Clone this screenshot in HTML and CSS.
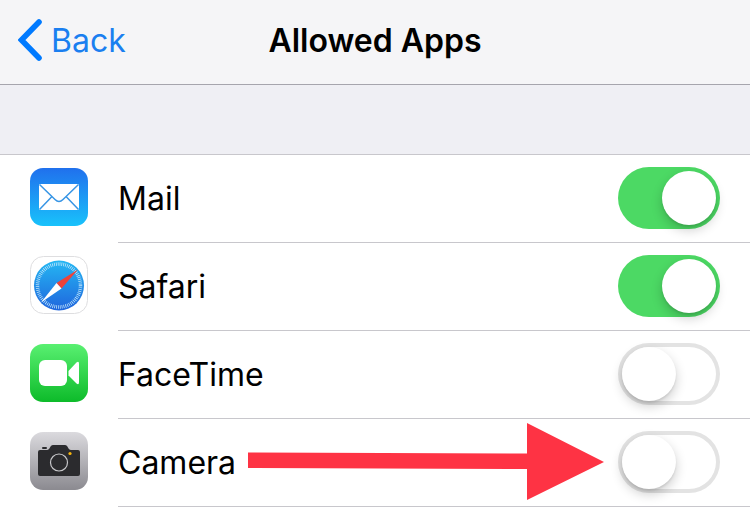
FILE: index.html
```html
<!DOCTYPE html>
<html lang="en">
<head>
<meta charset="utf-8">
<meta name="viewport" content="width=device-width, initial-scale=1">
<title>Allowed Apps</title>
<link rel="stylesheet" href="styles.css">
</head>
<body>
<header class="navbar">
  <a class="back" href="#">
    <svg class="chevron" viewBox="0 0 24 42" aria-hidden="true"><path d="M21 3 3.500 21 21 39" fill="none" stroke="#007aff" stroke-width="5.600" stroke-linecap="round" stroke-linejoin="miter"/></svg>
    <span class="text">Back</span>
  </a>
  <h1 class="title text">Allowed Apps</h1>
</header>
<main>
  <ul class="list">
    <li class="row">
      <svg class="icon" viewBox="0 0 58 58" aria-hidden="true">
        <defs><linearGradient id="mail-bg" x2="0" y2="1"><stop stop-color="#2070ed"/><stop offset="1" stop-color="#19c2fb"/></linearGradient></defs>
        <rect width="58" height="58" rx="13" fill="url(#mail-bg)"/>
        <rect x="9" y="16" width="40" height="26" rx="1" fill="#fff"/>
        <path d="M9.500 16.500 25 31.500Q29 35.500 33 31.500L48.500 16.500M9.500 41.500 21.500 29M48.500 41.500 36.500 29" fill="none" stroke="#3795e5" stroke-width="1.500"/>
      </svg>
      <div class="cell">
        <label class="text" for="mail">Mail</label>
        <input class="switch" type="checkbox" id="mail" checked>
      </div>
    </li>
    <li class="row">
      <svg class="icon" viewBox="0 0 58 58" aria-hidden="true">
        <defs><linearGradient id="safari-bg" x2="0" y2="1"><stop stop-color="#24b7f3"/><stop offset="1" stop-color="#2065dd"/></linearGradient></defs>
        <rect x=".5" y=".5" width="57" height="57" rx="13" fill="#fff" stroke="#dedee0"/>
        <circle cx="29" cy="29.500" r="25" fill="url(#safari-bg)"/>
        <circle cx="29" cy="29.500" r="21.500" fill="none" stroke="#c5e8fb" stroke-width="3.500" stroke-dasharray=".75 1.126"/>
        <path d="M48 13.500 26.500 27 31.500 32.500Z" fill="#ee4239"/>
        <path d="M11 46.500 26.500 27 31.500 32.500Z" fill="#fff"/>
      </svg>
      <div class="cell">
        <label class="text" for="safari">Safari</label>
        <input class="switch" type="checkbox" id="safari" checked>
      </div>
    </li>
    <li class="row">
      <svg class="icon" viewBox="0 0 58 58" aria-hidden="true">
        <defs><linearGradient id="facetime-bg" x2="0" y2="1"><stop stop-color="#59f071"/><stop offset="1" stop-color="#0dbb2a"/></linearGradient></defs>
        <rect width="58" height="58" rx="13" fill="url(#facetime-bg)"/>
        <rect x="9" y="16" width="28" height="26" rx="6" fill="#fff"/>
        <path d="M38.500 27 46.500 18.500Q49 16.500 49 20V38Q49 41.500 46.500 39.500L38.500 31.500Z" fill="#fff"/>
      </svg>
      <div class="cell">
        <label class="text" for="facetime">FaceTime</label>
        <input class="switch" type="checkbox" id="facetime">
      </div>
    </li>
    <li class="row">
      <svg class="icon" viewBox="0 0 58 58" aria-hidden="true">
        <defs><linearGradient id="camera-bg" x2="0" y2="1"><stop stop-color="#dbdade"/><stop offset="1" stop-color="#8b8a90"/></linearGradient></defs>
        <rect width="58" height="58" rx="13" fill="url(#camera-bg)"/>
        <rect x="12" y="15" width="5" height="2" rx="1" fill="#2b2b2e"/>
        <path d="M10 18H17C20 18 20 13 23 13H35C38 13 38 18 41 18H48Q50 18 50 20V42Q50 44 48 44H10Q8 44 8 42V20Q8 18 10 18Z" fill="#2b2b2e"/>
        <circle cx="29" cy="30.500" r="8.500" fill="none" stroke="#c7c7ca" stroke-width="1.200"/>
        <circle cx="40" cy="21.500" r="1.600" fill="#f7b50d"/>
      </svg>
      <div class="cell">
        <label class="text" for="camera">Camera</label>
        <input class="switch" type="checkbox" id="camera">
      </div>
      <svg class="arrow" viewBox="0 0 356 78" preserveAspectRatio="none" aria-hidden="true"><path d="M0 29.500 279 30.500V0L356 39 279 77V46L0 45Z" fill="#fe3344"/></svg>
    </li>
  </ul>
</main>
</body>
</html>
```
FILE: styles.css
```css
* {
  box-sizing: border-box;
}

body {
  margin: 0;
  background: #fff;
  color: #000;
  font-family: Inter, "Liberation Sans", sans-serif;
  font-size: 32px;
  line-height: 42px;
}

.navbar {
  display: grid;
  grid-template-columns: 1fr auto 1fr;
  align-items: center;
  padding: 18px 18px 22px;
  border-bottom: 1px solid #a6a5ad;
  background: #f5f5f7;
}

.back {
  display: flex;
  align-items: center;
  gap: 9px;
  color: #1a7ff0;
  text-decoration: none;
}

.chevron {
  width: 24px;
  height: 42px;
}

.text {
  padding-top: 2px;
}

.title {
  margin: 0;
  font-size: 32px;
  font-weight: 600;
}

main {
  padding-top: 69px;
  background: #efeff4;
}

.list {
  margin: 0;
  padding: 0;
  border-top: 1px solid #c8c7cc;
  background: #fff;
  list-style: none;
}

.row {
  position: relative;
  display: flex;
  gap: 30px;
  padding-left: 30px;
}

.icon {
  flex: none;
  width: 58px;
  height: 58px;
  margin-top: 13px;
}

.cell {
  flex: 1;
  display: flex;
  align-items: center;
  justify-content: space-between;
  height: 88px;
  padding-right: 30px;
  padding-bottom: 1px;
  border-bottom: 1px solid #c8c7cc;
}

.switch {
  appearance: none;
  width: 102px;
  height: 62px;
  margin: 0;
  padding: 4px;
  border-radius: 31px;
  background: #fff;
  box-shadow: inset 0 0 0 4px #e3e3e3;
}

.switch::before {
  content: "";
  display: block;
  width: 54px;
  height: 54px;
  border-radius: 50%;
  background: #fff;
  box-shadow: 0 5px 12px rgba(0, 0, 0, 0.2), 0 2px 2px rgba(0, 0, 0, 0.08);
}

.switch:checked {
  background: #4cd964;
  box-shadow: none;
}

.switch:checked::before {
  margin-left: auto;
}

.arrow {
  position: absolute;
  top: 4px;
  left: 248px;
  width: calc(100% - 394px);
  height: 78px;
  pointer-events: none;
}
```
